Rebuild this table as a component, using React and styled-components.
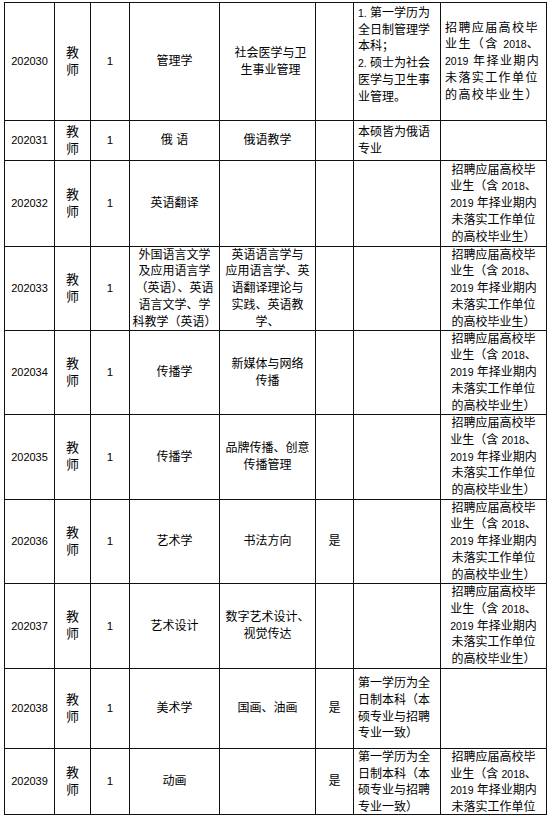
import React from 'react';
import styled, { createGlobalStyle } from 'styled-components';

const GlobalStyle = createGlobalStyle`
  html, body {
    margin: 0;
    padding: 0;
    background: #fff;
  }
  body {
    font-family: "Liberation Sans", "Noto Sans CJK SC", sans-serif;
    color: #000;
  }
`;

const Page = styled.div`
  width: 550px;
  height: 818px;
  padding: 2px 0 0 4px;
  box-sizing: border-box;
  overflow: hidden;
  background: #fff;
`;

const Table = styled.div`
  display: grid;
  grid-template-columns: 49px 35px 38px 89px 95px 37px 86px 105px;
  grid-template-rows: ${(p) => p.$rows};
  gap: 1px;
  padding: 1px;
  width: max-content;
  background: #111;
`;

const Cell = styled.div`
  background: #fff;
  display: flex;
  flex-direction: column;
  justify-content: ${(p) => (p.$v === 'top' ? 'flex-start' : 'center')};
  align-items: ${(p) => (p.$h === 'left' ? 'flex-start' : 'center')};
  padding: ${(p) => p.$pad || '0'};
  overflow: hidden;
  font-size: ${(p) => p.$size || '12px'};
  line-height: 16.7px;
  box-sizing: border-box;
  min-width: 0;
  min-height: 0;
`;

const Line = styled.div`
  white-space: pre;
  letter-spacing: ${(p) => p.$ls || 'normal'};
`;

const Num = styled.span`
  font-family: "Liberation Sans", sans-serif;
  font-size: 10.5px;
  letter-spacing: normal;
`;

const NOTE = [
  '招聘应届高校毕',
  <>业生（含 <Num>2018</Num>、</>,
  <><Num>2019</Num> 年择业期内</>,
  '未落实工作单位',
  '的高校毕业生）',
];

const REQ_ART = ['第一学历为全', '日制本科（本', '硕专业与招聘', '专业一致）'];

const rows = [
  {
    code: '202030',
    h: 117,
    major: ['管理学'],
    field: ['社会医学与卫', '生事业管理'],
    fieldPad: '0 0 0 6px',
    req: [
      <><Num>1.</Num> 第一学历为</>,
      '全日制管理学',
      '本科；',
      <><Num>2.</Num> 硕士为社会</>,
      '医学与卫生事',
      '业管理。',
    ],
    reqTop: true,
    note: NOTE,
    noteLeft: true,
  },
  { code: '202031', h: 39, major: ['俄 语'], field: ['俄语教学'], req: ['本硕皆为俄语', '专业'] },
  { code: '202032', h: 85, major: ['英语翻译'], note: NOTE },
  {
    code: '202033',
    h: 83,
    major: ['外国语言文学', '及应用语言学', '（英语）、英语', '语言文学、学', '科教学（英语）'],
    field: ['英语语言学与', '应用语言学、英', '语翻译理论与', '实践、英语教', '学、'],
    note: NOTE,
  },
  { code: '202034', h: 83, major: ['传播学'], field: ['新媒体与网络', '传播'], note: NOTE },
  { code: '202035', h: 84, major: ['传播学'], field: ['品牌传播、创意', '传播管理'], note: NOTE },
  { code: '202036', h: 83, major: ['艺术学'], field: ['书法方向'], yes: '是', note: NOTE },
  { code: '202037', h: 84, major: ['艺术设计'], field: ['数字艺术设计、', '视觉传达'], note: NOTE },
  { code: '202038', h: 79, major: ['美术学'], field: ['国画、油画'], yes: '是', req: REQ_ART },
  { code: '202039', h: 65, major: ['动画'], yes: '是', req: REQ_ART, note: NOTE, clip: true },
];

const Lines = ({ items = [], ls }) =>
  items.map((t, i) => (
    <Line key={i} $ls={ls}>
      {t}
    </Line>
  ));

const App = () => (
  <>
    <GlobalStyle />
    <Page>
      <Table $rows={rows.map((r) => `${r.h}px`).join(' ')}>
        {rows.map((r) => (
          <React.Fragment key={r.code}>
            <Cell $size="11px">{r.code}</Cell>
            <Cell $size="13px">
              <Lines items={['教', '师']} />
            </Cell>
            <Cell $size="11.5px">1</Cell>
            <Cell>
              <Lines items={r.major} />
            </Cell>
            <Cell $pad={r.fieldPad}>
              <Lines items={r.field} />
            </Cell>
            <Cell>{r.yes}</Cell>
            <Cell
              $h="left"
              $v={r.reqTop || r.clip ? 'top' : 'center'}
              $pad={r.reqTop ? '2px 0 0 4px' : '0 0 0 4px'}
            >
              <Lines items={r.req} />
            </Cell>
            <Cell
              $h={r.noteLeft ? 'left' : 'center'}
              $v={r.clip ? 'top' : 'center'}
              $pad={r.noteLeft ? '0 0 0 4px' : '0'}
            >
              <Lines items={r.note} ls={r.noteLeft ? '1.4px' : undefined} />
            </Cell>
          </React.Fragment>
        ))}
      </Table>
    </Page>
  </>
);

export default App;
